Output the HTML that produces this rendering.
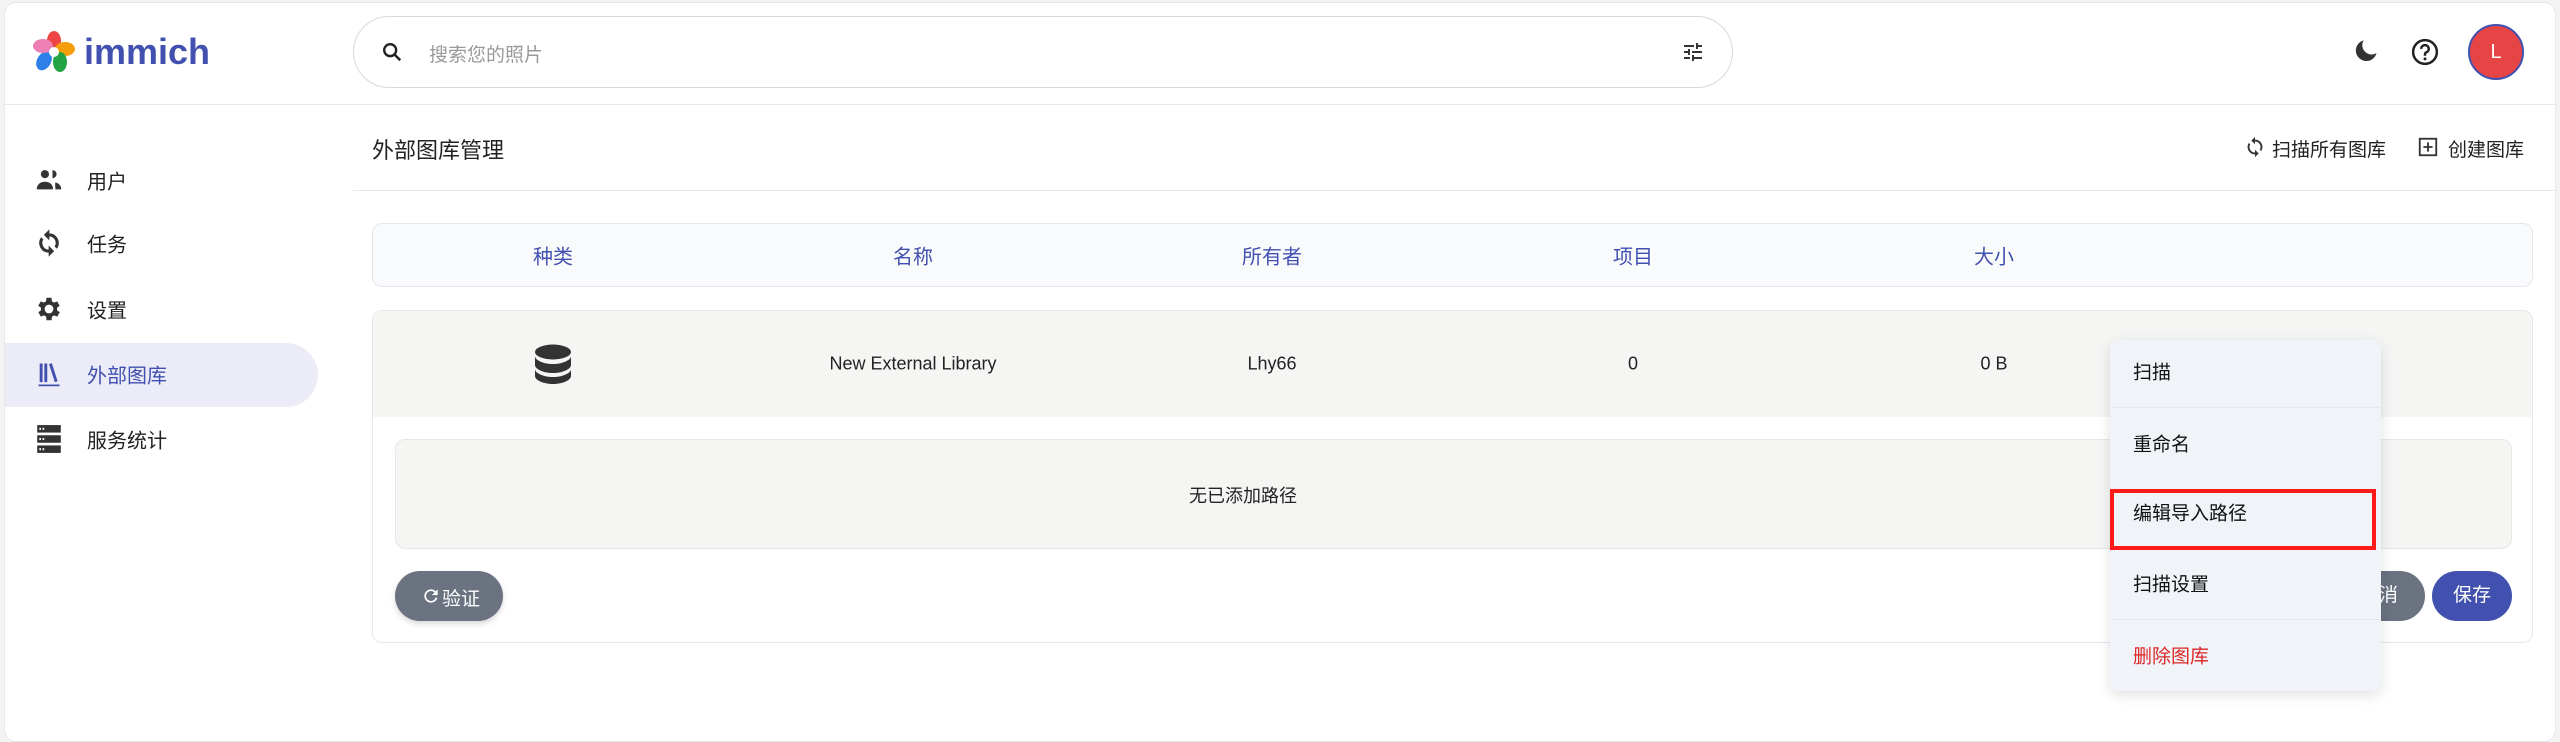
<!DOCTYPE html>
<html><head><meta charset="utf-8"><style>
*{box-sizing:border-box;margin:0;padding:0}
body{width:2560px;height:717px;background:#f3f3f3;font-family:"Liberation Sans","Noto Sans CJK SC",sans-serif;color:#222;position:relative;overflow:hidden}
.frame{position:absolute;left:4px;top:2px;width:2552px;height:740px;background:#fff;border:1px solid #e5e7eb;border-radius:12px}
.abs{position:absolute}
.hline{position:absolute;height:1px;background:#e5e7eb}
.c{position:absolute;transform:translate(-50%,-50%);white-space:nowrap}
.side{position:absolute;left:87px;font-size:20px;transform:translateY(-50%);color:#222}
.ic{position:absolute;transform:translate(-50%,-50%)}
.th{color:#4250af;font-size:20px}
.td{font-size:18px;color:#222}
.mi{position:absolute;left:2133px;font-size:19px;transform:translateY(-50%);color:#111}
</style></head><body>
<div class="frame"></div>
<!-- logo -->
<svg class="abs" style="left:33px;top:31px" width="42" height="42" viewBox="0 0 42 42">
<ellipse cx="21" cy="10" rx="7" ry="10" fill="#ef4444"/>
<ellipse cx="32" cy="18" rx="10" ry="7" fill="#f59e0b"/>
<ellipse cx="27" cy="31" rx="7" ry="10" fill="#22a344"/>
<ellipse cx="11" cy="30" rx="7" ry="10" fill="#2f7fe8" transform="rotate(30 11 30)"/>
<ellipse cx="10" cy="15" rx="10" ry="7" fill="#ec7fb3"/>
<circle cx="21" cy="21" r="5" fill="#fff"/>
</svg>
<div class="abs" style="left:84px;top:31px;font-size:36px;font-weight:bold;color:#4250af">immich</div>
<!-- search -->
<div class="abs" style="left:353px;top:16px;width:1380px;height:72px;border:1px solid #d8d8d8;border-radius:36px;background:#fff"></div>
<svg class="ic" style="left:392px;top:52px" width="22" height="22" viewBox="0 0 24 24"><circle cx="10" cy="10" r="6.5" fill="none" stroke="#222" stroke-width="2.6"/><path d="M15 15l6 6" stroke="#222" stroke-width="2.8"/></svg>
<div class="abs" style="left:429px;top:40px;font-size:19px;color:#9a9a9a">搜索您的照片</div>
<svg class="ic" style="left:1693px;top:52px" width="24" height="24" viewBox="0 0 24 24"><path d="M3 17v2h6v-2H3zM3 5v2h10V5H3zm10 16v-2h8v-2h-8v-2h-2v6h2zM7 9v2H3v2h4v2h2V9H7zm14 4v-2H11v2h10zm-6-4h2V7h4V5h-4V3h-2v6z" fill="#333"/></svg>
<!-- right icons -->
<svg class="ic" style="left:2366px;top:52px" width="28" height="28" viewBox="0 0 24 24"><path d="M10 2a9 9 0 1 0 11 11A8 8 0 0 1 10 2z" fill="#333"/></svg>
<svg class="ic" style="left:2425px;top:52px" width="30" height="30" viewBox="0 0 24 24"><circle cx="12" cy="12" r="9.5" fill="none" stroke="#222" stroke-width="2"/><path d="M9 9.5a3 3 0 1 1 4 2.8c-.7.3-1 .8-1 1.6V15" fill="none" stroke="#222" stroke-width="2"/><circle cx="12" cy="17.5" r="1.2" fill="#222"/></svg>
<div class="abs" style="left:2468px;top:24px;width:56px;height:56px;border-radius:50%;background:#e64545;border:2px solid #4250af;color:#fff;font-size:20px;text-align:center;line-height:52px">L</div>
<div class="hline" style="left:5px;top:104px;width:2550px"></div>
<!-- sidebar -->
<div class="abs" style="left:5px;top:343px;width:313px;height:64px;background:#ebecf7;border-radius:0 32px 32px 0"></div>
<svg class="ic" style="left:49px;top:180px" width="28" height="28" viewBox="0 0 24 24"><circle cx="8.5" cy="7" r="3.5" fill="#333"/><path d="M1.5 20c0-4 3-6.5 7-6.5s7 2.5 7 6.5z" fill="#333"/><path d="M15 3.5a3.5 3.5 0 0 1 0 7z" fill="#333"/><path d="M17.5 14c2.5.7 5 2.3 5 6h-5c0-2.4-.5-4.3 0-6z" fill="#333"/></svg>
<div class="side" style="top:180px">用户</div>
<svg class="ic" style="left:49px;top:243px" width="28" height="28" viewBox="0 0 24 24"><path d="M12 4V1L8 5l4 4V6a6 6 0 0 1 5.2 9l1.5 1.5A8 8 0 0 0 12 4zm0 14a6 6 0 0 1-5.2-9L5.3 7.5A8 8 0 0 0 12 20v3l4-4-4-4v3z" fill="#333" stroke="#333" stroke-width=".6"/></svg>
<div class="side" style="top:243px">任务</div>
<svg class="ic" style="left:49px;top:309px" width="30" height="30" viewBox="0 0 24 24"><path d="M19.4 13a7.5 7.5 0 0 0 0-2l2.1-1.6-2-3.5-2.5 1a7.6 7.6 0 0 0-1.7-1L15 3h-4l-.4 2.9a7.6 7.6 0 0 0-1.7 1l-2.5-1-2 3.5L6.6 11a7.5 7.5 0 0 0 0 2l-2.1 1.6 2 3.5 2.5-1c.5.4 1.1.7 1.7 1L11 21h4l.4-2.9c.6-.3 1.2-.6 1.7-1l2.5 1 2-3.5zM13 15.5a3.5 3.5 0 1 1 0-7 3.5 3.5 0 0 1 0 7z" fill="#333" transform="translate(-1 0)"/></svg>
<div class="side" style="top:309px">设置</div>
<svg class="ic" style="left:49px;top:374px" width="28" height="28" viewBox="0 0 24 24"><path d="M4 3h2.5v16H4zM8 3h2.5v16H8zM12 3.5l2.4-.8 5 15.5-2.4.8z M3 21h18v1.5H3z" fill="#4250af"/></svg>
<div class="side" style="top:374px;color:#4250af">外部图库</div>
<svg class="ic" style="left:49px;top:439px" width="26" height="30" viewBox="0 0 24 28"><rect x="1" y="1" width="22" height="7" fill="#333"/><rect x="1" y="10.5" width="22" height="7" fill="#333"/><rect x="1" y="20" width="22" height="7" fill="#333"/><rect x="3" y="3.5" width="1.5" height="2" fill="#fff"/><rect x="6" y="3.5" width="1.5" height="2" fill="#fff"/><rect x="3" y="13" width="1.5" height="2" fill="#fff"/><rect x="6" y="13" width="1.5" height="2" fill="#fff"/><rect x="3" y="22.5" width="1.5" height="2" fill="#fff"/><rect x="6" y="22.5" width="1.5" height="2" fill="#fff"/></svg>
<div class="side" style="top:439px">服务统计</div>
<!-- title -->
<div class="abs" style="left:372px;top:133px;font-size:22px;color:#222">外部图库管理</div>
<div class="hline" style="left:353px;top:190px;width:2202px"></div>
<svg class="ic" style="left:2255px;top:147px" width="22" height="22" viewBox="0 0 24 24"><path d="M12 4V1L8 5l4 4V6a6 6 0 0 1 5.2 9l1.5 1.5A8 8 0 0 0 12 4zm0 14a6 6 0 0 1-5.2-9L5.3 7.5A8 8 0 0 0 12 20v3l4-4-4-4v3z" fill="#333"/></svg>
<div class="abs" style="left:2272px;top:135px;font-size:19px;color:#222">扫描所有图库</div>
<svg class="ic" style="left:2428px;top:147px" width="22" height="22" viewBox="0 0 24 24"><rect x="3" y="3" width="18" height="18" fill="none" stroke="#333" stroke-width="2"/><path d="M12 7v10M7 12h10" stroke="#333" stroke-width="2"/></svg>
<div class="abs" style="left:2448px;top:135px;font-size:19px;color:#222">创建图库</div>
<!-- table header -->
<div class="abs" style="left:372px;top:223px;width:2161px;height:64px;background:#f8fafc;border:1px solid #e5e7eb;border-radius:10px"></div>
<div class="c th" style="left:553px;top:255px">种类</div>
<div class="c th" style="left:913px;top:255px">名称</div>
<div class="c th" style="left:1272px;top:255px">所有者</div>
<div class="c th" style="left:1633px;top:255px">项目</div>
<div class="c th" style="left:1994px;top:255px">大小</div>
<!-- row -->
<div class="abs" style="left:372px;top:310px;width:2161px;height:333px;background:#fff;border:1px solid #e5e7eb;border-radius:10px;overflow:hidden"><div style="height:106px;background:#f5f5f4"></div></div>
<svg class="ic" style="left:553px;top:364px" width="38" height="40" viewBox="0 0 38 40"><ellipse cx="19" cy="8" rx="18" ry="7.5" fill="#333"/><path d="M1 12c0 4 8 8 18 8s18-4 18-8v9c0 4-8 8-18 8S1 25 1 21z" fill="#333"/><path d="M1 25c0 4 8 8 18 8s18-4 18-8v7c0 4-8 8-18 8S1 36 1 32z" fill="#333"/></svg>
<div class="c td" style="left:913px;top:364px">New External Library</div>
<div class="c td" style="left:1272px;top:364px">Lhy66</div>
<div class="c td" style="left:1633px;top:364px">0</div>
<div class="c td" style="left:1994px;top:364px">0 B</div>
<div class="abs" style="left:395px;top:439px;width:2117px;height:110px;background:#f5f5f4;border:1px solid #e7e7e5;border-radius:10px"></div>
<div class="c td" style="left:1243px;top:495px">无已添加路径</div>
<div class="abs" style="left:395px;top:571px;width:108px;height:50px;background:#6b7280;border-radius:25px;box-shadow:0 3px 6px rgba(0,0,0,.15)"></div>
<svg class="ic" style="left:431px;top:596px" width="20" height="20" viewBox="0 0 24 24"><path d="M17.65 6.35A7.96 7.96 0 0 0 12 4a8 8 0 1 0 7.73 10h-2.08A6 6 0 1 1 12 6c1.66 0 3.14.69 4.22 1.78L13 11h7V4l-2.35 2.35z" fill="#fff"/></svg>
<div class="abs" style="left:442px;top:584px;font-size:19px;color:#fff">验证</div>
<div class="abs" style="left:2330px;top:571px;width:95px;height:50px;background:#6b7280;border-radius:25px;color:#fff;font-size:19px;line-height:50px;padding-left:30px">取消</div>
<div class="abs" style="left:2432px;top:571px;width:80px;height:50px;background:#4250af;border-radius:25px;color:#fff;font-size:19px;line-height:50px;text-align:center">保存</div>
<!-- menu -->
<div class="abs" style="left:2110px;top:340px;width:271px;height:351px;background:#f0f4f8;border-radius:8px;box-shadow:0 4px 14px rgba(0,0,0,.12)"></div>
<div class="hline" style="left:2112px;top:407px;width:268px"></div>
<div class="hline" style="left:2112px;top:619px;width:268px"></div>
<div class="mi" style="top:371px">扫描</div>
<div class="mi" style="top:443px">重命名</div>
<div class="mi" style="top:512px">编辑导入路径</div>
<div class="mi" style="top:583px">扫描设置</div>
<div class="mi" style="top:655px;color:#dc2626">删除图库</div>
<div class="abs" style="left:2110px;top:489px;width:266px;height:61px;border:4px solid #ff1a1a"></div>
</body></html>
